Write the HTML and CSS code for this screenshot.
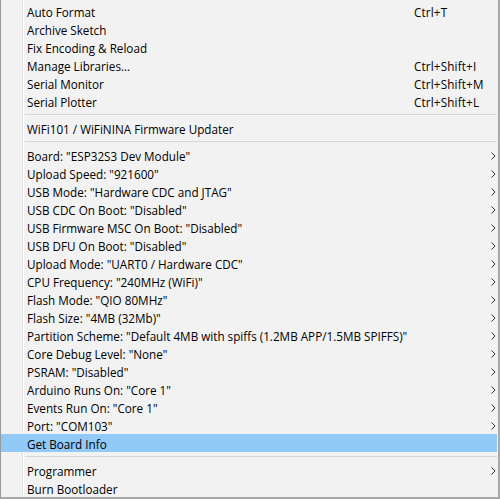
FILE: index.html
```html
<!DOCTYPE html>
<html>
<head>
<meta charset="utf-8">
<link rel="stylesheet" href="styles.css">
</head>
<body>
<div class="menu">
  <div class="item"><span class="label">Auto Format</span><span class="key">Ctrl+T</span></div>
  <div class="item"><span class="label">Archive Sketch</span></div>
  <div class="item"><span class="label">Fix Encoding &amp; Reload</span></div>
  <div class="item"><span class="label">Manage Libraries...</span><span class="key">Ctrl+Shift+I</span></div>
  <div class="item"><span class="label">Serial Monitor</span><span class="key">Ctrl+Shift+M</span></div>
  <div class="item"><span class="label">Serial Plotter</span><span class="key">Ctrl+Shift+L</span></div>
  <div class="sep"></div>
  <div class="item"><span class="label">WiFi101 / WiFiNINA Firmware Updater</span></div>
  <div class="sep"></div>
  <div class="item sub"><span class="label">Board: "ESP32S3 Dev Module"</span><svg class="arrow" width="5" height="8" viewBox="0 0 5 8"><path d="M0.5 0.5 L4 4 L0.5 7.5"/></svg></div>
  <div class="item sub"><span class="label">Upload Speed: "921600"</span><svg class="arrow" width="5" height="8" viewBox="0 0 5 8"><path d="M0.5 0.5 L4 4 L0.5 7.5"/></svg></div>
  <div class="item sub"><span class="label">USB Mode: "Hardware CDC and JTAG"</span><svg class="arrow" width="5" height="8" viewBox="0 0 5 8"><path d="M0.5 0.5 L4 4 L0.5 7.5"/></svg></div>
  <div class="item sub"><span class="label">USB CDC On Boot: "Disabled"</span><svg class="arrow" width="5" height="8" viewBox="0 0 5 8"><path d="M0.5 0.5 L4 4 L0.5 7.5"/></svg></div>
  <div class="item sub"><span class="label">USB Firmware MSC On Boot: "Disabled"</span><svg class="arrow" width="5" height="8" viewBox="0 0 5 8"><path d="M0.5 0.5 L4 4 L0.5 7.5"/></svg></div>
  <div class="item sub"><span class="label">USB DFU On Boot: "Disabled"</span><svg class="arrow" width="5" height="8" viewBox="0 0 5 8"><path d="M0.5 0.5 L4 4 L0.5 7.5"/></svg></div>
  <div class="item sub"><span class="label">Upload Mode: "UART0 / Hardware CDC"</span><svg class="arrow" width="5" height="8" viewBox="0 0 5 8"><path d="M0.5 0.5 L4 4 L0.5 7.5"/></svg></div>
  <div class="item sub"><span class="label">CPU Frequency: "240MHz (WiFi)"</span><svg class="arrow" width="5" height="8" viewBox="0 0 5 8"><path d="M0.5 0.5 L4 4 L0.5 7.5"/></svg></div>
  <div class="item sub"><span class="label">Flash Mode: "QIO 80MHz"</span><svg class="arrow" width="5" height="8" viewBox="0 0 5 8"><path d="M0.5 0.5 L4 4 L0.5 7.5"/></svg></div>
  <div class="item sub"><span class="label">Flash Size: "4MB (32Mb)"</span><svg class="arrow" width="5" height="8" viewBox="0 0 5 8"><path d="M0.5 0.5 L4 4 L0.5 7.5"/></svg></div>
  <div class="item sub"><span class="label">Partition Scheme: "Default 4MB with spiffs (1.2MB APP/1.5MB SPIFFS)"</span><svg class="arrow" width="5" height="8" viewBox="0 0 5 8"><path d="M0.5 0.5 L4 4 L0.5 7.5"/></svg></div>
  <div class="item sub"><span class="label">Core Debug Level: "None"</span><svg class="arrow" width="5" height="8" viewBox="0 0 5 8"><path d="M0.5 0.5 L4 4 L0.5 7.5"/></svg></div>
  <div class="item sub"><span class="label">PSRAM: "Disabled"</span><svg class="arrow" width="5" height="8" viewBox="0 0 5 8"><path d="M0.5 0.5 L4 4 L0.5 7.5"/></svg></div>
  <div class="item sub"><span class="label">Arduino Runs On: "Core 1"</span><svg class="arrow" width="5" height="8" viewBox="0 0 5 8"><path d="M0.5 0.5 L4 4 L0.5 7.5"/></svg></div>
  <div class="item sub"><span class="label">Events Run On: "Core 1"</span><svg class="arrow" width="5" height="8" viewBox="0 0 5 8"><path d="M0.5 0.5 L4 4 L0.5 7.5"/></svg></div>
  <div class="item sub"><span class="label">Port: "COM103"</span><svg class="arrow" width="5" height="8" viewBox="0 0 5 8"><path d="M0.5 0.5 L4 4 L0.5 7.5"/></svg></div>
  <div class="item active"><span class="label">Get Board Info</span></div>
  <div class="sep"></div>
  <div class="item sub"><span class="label">Programmer</span><svg class="arrow" width="5" height="8" viewBox="0 0 5 8"><path d="M0.5 0.5 L4 4 L0.5 7.5"/></svg></div>
  <div class="item"><span class="label">Burn Bootloader</span></div>
</div>
</body>
</html>
```
FILE: styles.css
```css
html, body {
  margin: 0;
  padding: 0;
  background: #f2f2f2;
}
.menu {
  width: 500px;
  height: 499px;
  box-sizing: border-box;
  border-left: 1px solid #9a9a9a;
  border-right: 2px solid #a8a8a8;
  border-bottom: 2px solid #a8a8a8;
  padding-top: 2px;
  background: linear-gradient(to right, transparent 21px, #e2e2e2 21px, #e2e2e2 22px, #ffffff 22px, #ffffff 23px, transparent 23px), #f2f2f2;
  font-family: "Open Sans", "Noto Sans", sans-serif;
  font-size: 11.7px;
  color: #000;
}
.item {
  display: grid;
  grid-template-columns: minmax(0, 1fr) 71px 12px;
  align-items: center;
  box-sizing: border-box;
  height: 18px;
  padding-top: 2px;
  line-height: 16px;
  padding-left: 26px;
  margin-right: 1px;
  white-space: nowrap;
}
.item.active {
  background: #91c9f7;
}
.label {
  grid-column: 1;
  overflow: visible;
}
.key {
  grid-column: 2;
  letter-spacing: 0.15px;
}
.arrow {
  grid-column: 3;
  justify-self: start;
  margin-left: 6px;
  margin-top: -1px;
  fill: none;
  stroke: #333;
  stroke-width: 1;
}
.sep {
  height: 1px;
  margin: 4px 1px 4px 24px;
  background: #d7d7d7;
}
```
